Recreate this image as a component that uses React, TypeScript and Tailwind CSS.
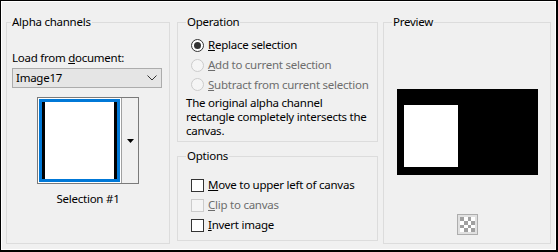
import React from 'react';

const FONT = "font-['Noto_Sans','DejaVu_Sans',sans-serif]";

/**
 * Windows-style group box built on fieldset/legend
 */
function GroupBox({
  title,
  titleOffset,
  className = '',
  children,
}: {
  title: string;
  titleOffset: string;
  className?: string;
  children?: React.ReactNode;
}) {
  return (
    <fieldset className={`border border-[#dcdcdc] ${className}`}>
      <legend className={`${titleOffset} px-[1px] leading-[16px] text-black`}>{title}</legend>
      {children}
    </fieldset>
  );
}

function Radio({ checked, disabled, children }: { checked?: boolean; disabled?: boolean; children: React.ReactNode }) {
  return (
    <div className="flex items-center whitespace-nowrap">
      <span
        className={`flex h-[13px] w-[13px] shrink-0 items-center justify-center rounded-full border ${
          disabled ? 'border-[#cccccc] bg-[#f5f5f5]' : 'border-[#333333] bg-white'
        }`}
      >
        {checked && <span className="h-[7px] w-[7px] rounded-full bg-[#333333]" />}
      </span>
      <span className={`ml-[4px] ${disabled ? 'text-[#6d6d6d]' : 'text-black'}`}>{children}</span>
    </div>
  );
}

function Check({ disabled, children }: { disabled?: boolean; children: React.ReactNode }) {
  return (
    <div className="flex items-center whitespace-nowrap">
      <span
        className={`h-[13px] w-[13px] shrink-0 border ${
          disabled ? 'border-[#cccccc] bg-[#f5f5f5]' : 'border-[#333333] bg-white'
        }`}
      />
      <span className={`ml-[4px] ${disabled ? 'text-[#6d6d6d]' : 'text-black'}`}>{children}</span>
    </div>
  );
}

export default function App() {
  return (
    <div className={`${FONT} h-[252px] w-[558px] border-l border-t border-r-2 border-b-2 border-black text-[11.5px] leading-[16px] tracking-[-0.25px] text-black`}>
      <div className="flex h-full border border-white bg-[#f0f0f0] pl-[4px] pt-[12px]">
        {/* Alpha channels */}
        <GroupBox title="Alpha channels" titleOffset="ml-[4px]" className="h-[230px] w-[164px]">
          <div className="px-[5px] pt-[20px]">
            <div className="whitespace-nowrap">
              Load from <u>d</u>ocument:
            </div>
            <div className="mt-[2px] flex h-[20px] w-[150px] items-center justify-between border border-[#acacac] bg-[#e5e5e5] pl-[3px] pr-[4px]">
              <span>Image17</span>
              <svg width="10" height="6" viewBox="0 0 10 6" fill="none">
                <path d="M0.5 0.5 L5 5 L9.5 0.5" stroke="#333" strokeWidth="1" />
              </svg>
            </div>
          </div>
          <div className="mx-auto mt-[9px] flex h-[87px] w-[102px] border border-[#7a7a7a] bg-white">
            <div className="p-[1px]">
              <div className="h-[83px] w-[81px] border-[3px] border-[#0078d7]">
                <div className="h-full w-full border-x-[3px] border-black bg-white" />
              </div>
            </div>
            <div className="flex flex-1 items-center justify-center border-l border-[#a0a0a0] bg-[#f0f0f0]">
              <svg width="7" height="4" viewBox="0 0 7 4">
                <path d="M0 0 H7 L3.5 4 Z" fill="#000" />
              </svg>
            </div>
          </div>
          <div className="mt-[7px] text-center">Selection #1</div>
        </GroupBox>

        {/* Operation + Options */}
        <div className="ml-[7px] flex w-[201px] flex-col">
          <GroupBox title="Operation" titleOffset="ml-[8px]" className="h-[128px]">
            <div className="pl-[13px] pt-[5px]">
              <div className="flex h-[20px] items-center">
                <Radio checked>
                  <u>R</u>eplace selection
                </Radio>
              </div>
              <div className="flex h-[20px] items-center">
                <Radio disabled>
                  <u>A</u>dd to current selection
                </Radio>
              </div>
              <div className="flex h-[19px] items-center">
                <Radio disabled>
                  <u>S</u>ubtract from current selection
                </Radio>
              </div>
            </div>
            <p className="mt-[2px] whitespace-nowrap pl-[8px] leading-[14px]">
              The original alpha channel
              <br />
              rectangle completely intersects the
              <br />
              canvas.
            </p>
          </GroupBox>
          <GroupBox title="Options" titleOffset="ml-[8px]" className="mt-[6px] h-[93px]">
            <div className="pl-[13px] pt-[11px]">
              <div className="flex h-[20px] items-center">
                <Check>
                  <u>M</u>ove to upper left of canvas
                </Check>
              </div>
              <div className="flex h-[20px] items-center">
                <Check disabled>
                  <u>C</u>lip to canvas
                </Check>
              </div>
              <div className="flex h-[20px] items-center">
                <Check>
                  <u>I</u>nvert image
                </Check>
              </div>
            </div>
          </GroupBox>
        </div>

        {/* Preview */}
        <GroupBox title="Preview" titleOffset="ml-[8px]" className="ml-[5px] h-[230px] w-[168px]">
          <div className="mx-auto mt-[59px] h-[86px] w-[141px] bg-black pl-[7px] pt-[16px]">
            <div className="h-[62px] w-[54px] bg-white" />
          </div>
          <div className="mx-auto mt-[39px] flex h-[21px] w-[21px] items-center justify-center border border-[#adadad] bg-[#e1e1e1]">
            <svg width="15" height="15" viewBox="0 0 4 4" shapeRendering="crispEdges">
              <rect width="4" height="4" fill="#fff" />
              <rect x="0" y="0" width="1" height="1" fill="#a0a0a0" />
              <rect x="2" y="0" width="1" height="1" fill="#a0a0a0" />
              <rect x="1" y="1" width="1" height="1" fill="#a0a0a0" />
              <rect x="3" y="1" width="1" height="1" fill="#a0a0a0" />
              <rect x="0" y="2" width="1" height="1" fill="#a0a0a0" />
              <rect x="2" y="2" width="1" height="1" fill="#a0a0a0" />
              <rect x="1" y="3" width="1" height="1" fill="#a0a0a0" />
              <rect x="3" y="3" width="1" height="1" fill="#a0a0a0" />
            </svg>
          </div>
        </GroupBox>
      </div>
    </div>
  );
}
